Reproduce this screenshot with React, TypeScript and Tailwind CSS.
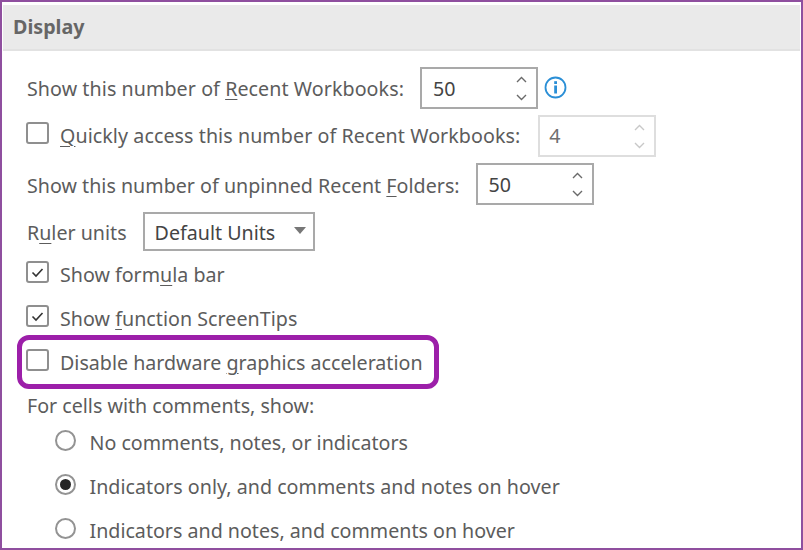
import React from "react";

const Check = ({ checked = false, up = "-mt-[6px]" }: { checked?: boolean; up?: string }) => (
  <span className={`-ml-[1px] ${up} flex h-[22px] w-[23px] shrink-0 items-center justify-center rounded-[3px] border-2 border-[#8f8f8f] bg-white`}>
    {checked && (
      <svg width="13" height="11" viewBox="0 0 13 11" fill="none">
        <path d="M1.5 5.5 L5 9 L11.5 2" stroke="#333" strokeWidth="1.6" />
      </svg>
    )}
  </span>
);

const Radio = ({ checked = false }: { checked?: boolean }) => (
  <span className="-mt-[5px] flex h-[21px] w-[21px] shrink-0 items-center justify-center rounded-full border-2 border-[#939393] bg-white">
    {checked && <span className="h-[11px] w-[11px] rounded-full bg-[#262626]" />}
  </span>
);

const Spinner = ({ value, disabled = false }: { value: string; disabled?: boolean }) => {
  const stroke = disabled ? "#c8c8c8" : "#6a6a6a";
  return (
    <div
      className={`flex h-[42px] w-[118px] shrink-0 items-center justify-between border-2 pr-[9px] ${
        disabled ? "border-[#dedede] pl-[9px] text-[#6f6f6f]" : "border-[#a9a9a9] pl-[11px] text-[#444]"
      }`}
    >
      <span className={disabled ? "" : "pt-[1px]"}>{value}</span>
      <span className="flex flex-col gap-[11px]">
        <svg width="11" height="7" viewBox="0 0 11 7" fill="none">
          <path d="M1 6 L5.5 1.5 L10 6" stroke={stroke} strokeWidth="1.4" />
        </svg>
        <svg width="11" height="7" viewBox="0 0 11 7" fill="none">
          <path d="M1 1 L5.5 5.5 L10 1" stroke={stroke} strokeWidth="1.4" />
        </svg>
      </span>
    </div>
  );
};

const U = ({ children }: { children: React.ReactNode }) => (
  <span className="underline decoration-1 underline-offset-[3px]">{children}</span>
);

export default function App() {
  return (
    <div
      className="relative h-[550px] w-[803px] overflow-hidden border-2 border-[#8f4f9f] bg-white px-[1px] pt-[3px] text-[19.65px] leading-[28px] text-[#5c5c5c]"
      style={{ fontFamily: '"Noto Sans", "Open Sans", sans-serif' }}
    >
      <div className="flex h-[46px] items-center border-b-2 border-[#e2e2e2] bg-[#eaeaea] pl-[10px] text-[19.7px] font-bold text-[#666]">
        Display
      </div>

      <div className="flex flex-col pl-[24px]">
        <div className="mt-[16px] flex h-[42px] items-center">
          <span className="pt-[2px] tracking-[0.08px]">Show this number of <U>R</U>ecent Workbooks:</span>
          <span className="ml-[16px]"><Spinner value="50" /></span>
          <svg className="-mt-[2px] ml-[6px]" width="23" height="23" viewBox="0 0 23 23" fill="none">
            <circle cx="11.5" cy="11.5" r="10" stroke="#2b8fd6" strokeWidth="1.8" />
            <rect x="10.2" y="9.5" width="2.8" height="8" fill="#2b8fd6" />
            <rect x="10.2" y="5.2" width="2.8" height="2.8" fill="#2b8fd6" />
          </svg>
        </div>

        <div className="mt-[6px] flex h-[42px] items-center">
          <Check up="-mt-[7px]" />
          <span className="ml-[11px] -mt-[1px] tracking-[0.08px]"><U>Q</U>uickly access this number of Recent Workbooks:</span>
          <span className="ml-[18px]"><Spinner value="4" disabled /></span>
        </div>

        <div className="mt-[6px] flex h-[42px] items-center">
          <span className="pt-[3px] tracking-[0.02px]">Show this number of unpinned Recent <U>F</U>olders:</span>
          <span className="ml-[16px]"><Spinner value="50" /></span>
        </div>

        <div className="mt-[7px] flex h-[39px] items-center">
          <span className="pt-[2px]">R<U>u</U>ler units</span>
          <div className="ml-[16px] flex h-[39px] w-[172px] items-center justify-between border-2 border-[#a9a9a9] pl-[10px] pr-[7px] text-[#444]">
            <span className="pt-[2px]">Default Units</span>
            <span className="-mt-[3px] h-0 w-0 border-x-[6px] border-t-[7px] border-x-transparent border-t-[#777]" />
          </div>
        </div>

        <div className="mt-[8px] flex h-[32px] items-center">
          <Check checked />
          <span className="ml-[11px]">Show form<U>u</U>la bar</span>
        </div>
        <div className="mt-[12px] flex h-[32px] items-center">
          <Check checked />
          <span className="ml-[11px] tracking-[0.04px]">Show <U>f</U>unction ScreenTips</span>
        </div>
        <div className="mt-[12px] flex h-[32px] items-center">
          <Check />
          <span className="ml-[11px]">Disable hardware <U>g</U>raphics acceleration</span>
        </div>

        <div className="mt-[11px] flex h-[32px] items-center">For cells with comments, show:</div>

        <div className="mt-[5px] flex h-[32px] items-center pl-[28px]">
          <Radio />
          <span className="ml-[13.5px]">No comments, notes, or indicators</span>
        </div>
        <div className="mt-[12px] flex h-[32px] items-center pl-[28px]">
          <Radio checked />
          <span className="ml-[13.5px] tracking-[0.03px]">Indicators only, and comments and notes on hover</span>
        </div>
        <div className="mt-[12px] flex h-[32px] items-center pl-[28px]">
          <Radio />
          <span className="ml-[13.5px]">Indicators and notes, and comments on hover</span>
        </div>
      </div>

      <div className="absolute left-[15px] top-[333px] h-[54px] w-[422px] rounded-[12px] border-[5px] border-[#9c1fa9]" />
    </div>
  );
}
